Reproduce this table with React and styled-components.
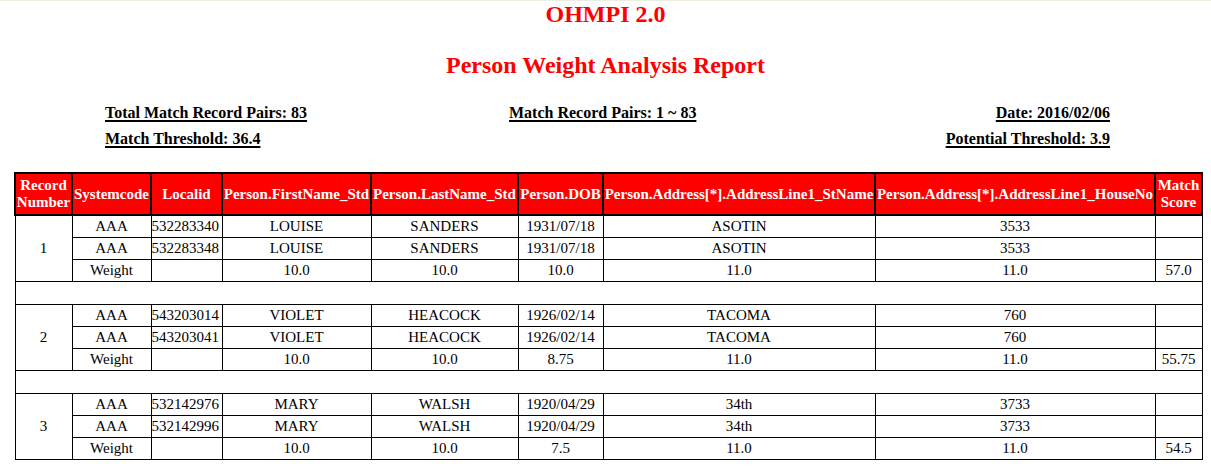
import React from "react";
import styled, { createGlobalStyle } from "styled-components";

const GlobalStyle = createGlobalStyle`
  html, body {
    margin: 0;
    padding: 0;
    background: #ffffff;
  }
  body {
    font-family: "Liberation Serif", "Times New Roman", serif;
    color: #000;
  }
`;

const Page = styled.div`
  border-top: 1px solid #eceee0;
  width: 1211px;
  box-sizing: border-box;
`;

const Title = styled.h2`
  margin: 0;
  margin-top: ${(p) => p.$top}px;
  font-size: 24px;
  font-weight: bold;
  line-height: 27.6px;
  color: #ff0000;
  text-align: center;
`;

const InfoGrid = styled.div`
  display: grid;
  grid-template-columns: 404px 1fr auto;
  row-gap: 7px;
  margin: 25px 0 0 105px;
  width: 1005px;
  font-size: 16px;
  font-weight: bold;
  line-height: 18.4px;
`;

const Info = styled.span`
  text-decoration: underline;
  text-decoration-thickness: 2px;
  text-underline-offset: 2px;
  justify-self: ${(p) => p.$align || "start"};
  grid-column: ${(p) => p.$col};
`;

const Table = styled.table`
  margin: 24px 0 0 14px;
  width: 1187px;
  table-layout: fixed;
  border-collapse: collapse;
  font-size: 15px;
  line-height: 17px;
`;

const Th = styled.th`
  background: #ff0000;
  color: #ffffff;
  font-weight: bold;
  border: 2px solid #000;
  padding: 3px 0 2px;
  line-height: 17.25px;
  white-space: nowrap;
  text-align: center;
  vertical-align: middle;
`;

const Td = styled.td`
  border: 1px solid #000;
  padding: 2px 0;
  text-align: ${(p) => p.$align || "center"};
  vertical-align: middle;
  white-space: nowrap;
`;

const SpacerCell = styled.td`
  border: 1px solid #000;
  padding: 2px 0;
  height: 18px;
`;

const widths = [57, 79, 71, 149, 147, 85, 272, 280, 47];

const headers = [
  ["Record", "Number"],
  ["Systemcode"],
  ["Localid"],
  ["Person.FirstName_Std"],
  ["Person.LastName_Std"],
  ["Person.DOB"],
  ["Person.Address[*].AddressLine1_StName"],
  ["Person.Address[*].AddressLine1_HouseNo"],
  ["Match", "Score"],
];

const groups = [
  {
    n: 1,
    rows: [
      ["AAA", "532283340", "LOUISE", "SANDERS", "1931/07/18", "ASOTIN", "3533", ""],
      ["AAA", "532283348", "LOUISE", "SANDERS", "1931/07/18", "ASOTIN", "3533", ""],
      ["Weight", "", "10.0", "10.0", "10.0", "11.0", "11.0", "57.0"],
    ],
  },
  {
    n: 2,
    rows: [
      ["AAA", "543203014", "VIOLET", "HEACOCK", "1926/02/14", "TACOMA", "760", ""],
      ["AAA", "543203041", "VIOLET", "HEACOCK", "1926/02/14", "TACOMA", "760", ""],
      ["Weight", "", "10.0", "10.0", "8.75", "11.0", "11.0", "55.75"],
    ],
  },
  {
    n: 3,
    rows: [
      ["AAA", "532142976", "MARY", "WALSH", "1920/04/29", "34th", "3733", ""],
      ["AAA", "532142996", "MARY", "WALSH", "1920/04/29", "34th", "3733", ""],
      ["Weight", "", "10.0", "10.0", "7.5", "11.0", "11.0", "54.5"],
    ],
  },
];

export default function App() {
  return (
    <Page>
      <GlobalStyle />
      <Title $top={0}>OHMPI 2.0</Title>
      <Title $top={23}>Person Weight Analysis Report</Title>
      <InfoGrid>
        <Info $col={1}>Total Match Record Pairs: 83</Info>
        <Info $col={2}>Match Record Pairs: 1 ~ 83</Info>
        <Info $col={3} $align="end">Date: 2016/02/06</Info>
        <Info $col={1}>Match Threshold: 36.4</Info>
        <Info $col={3} $align="end">Potential Threshold: 3.9</Info>
      </InfoGrid>
      <Table>
        <colgroup>
          {widths.map((w, i) => (
            <col key={i} style={{ width: w }} />
          ))}
        </colgroup>
        <thead>
          <tr>
            {headers.map((h, i) => (
              <Th key={i}>
                {h.map((line, j) => (
                  <React.Fragment key={j}>
                    {j > 0 && <br />}
                    {line}
                  </React.Fragment>
                ))}
              </Th>
            ))}
          </tr>
        </thead>
        <tbody>
          {groups.map((g, gi) => (
            <React.Fragment key={g.n}>
              {gi > 0 && (
                <tr>
                  <SpacerCell colSpan={9} />
                </tr>
              )}
              {g.rows.map((r, ri) => (
                <tr key={ri}>
                  {ri === 0 && <Td rowSpan={3}>{g.n}</Td>}
                  {r.map((c, ci) => (
                    <Td key={ci} $align={ci === 1 ? "left" : "center"}>
                      {c}
                    </Td>
                  ))}
                </tr>
              ))}
            </React.Fragment>
          ))}
        </tbody>
      </Table>
    </Page>
  );
}
